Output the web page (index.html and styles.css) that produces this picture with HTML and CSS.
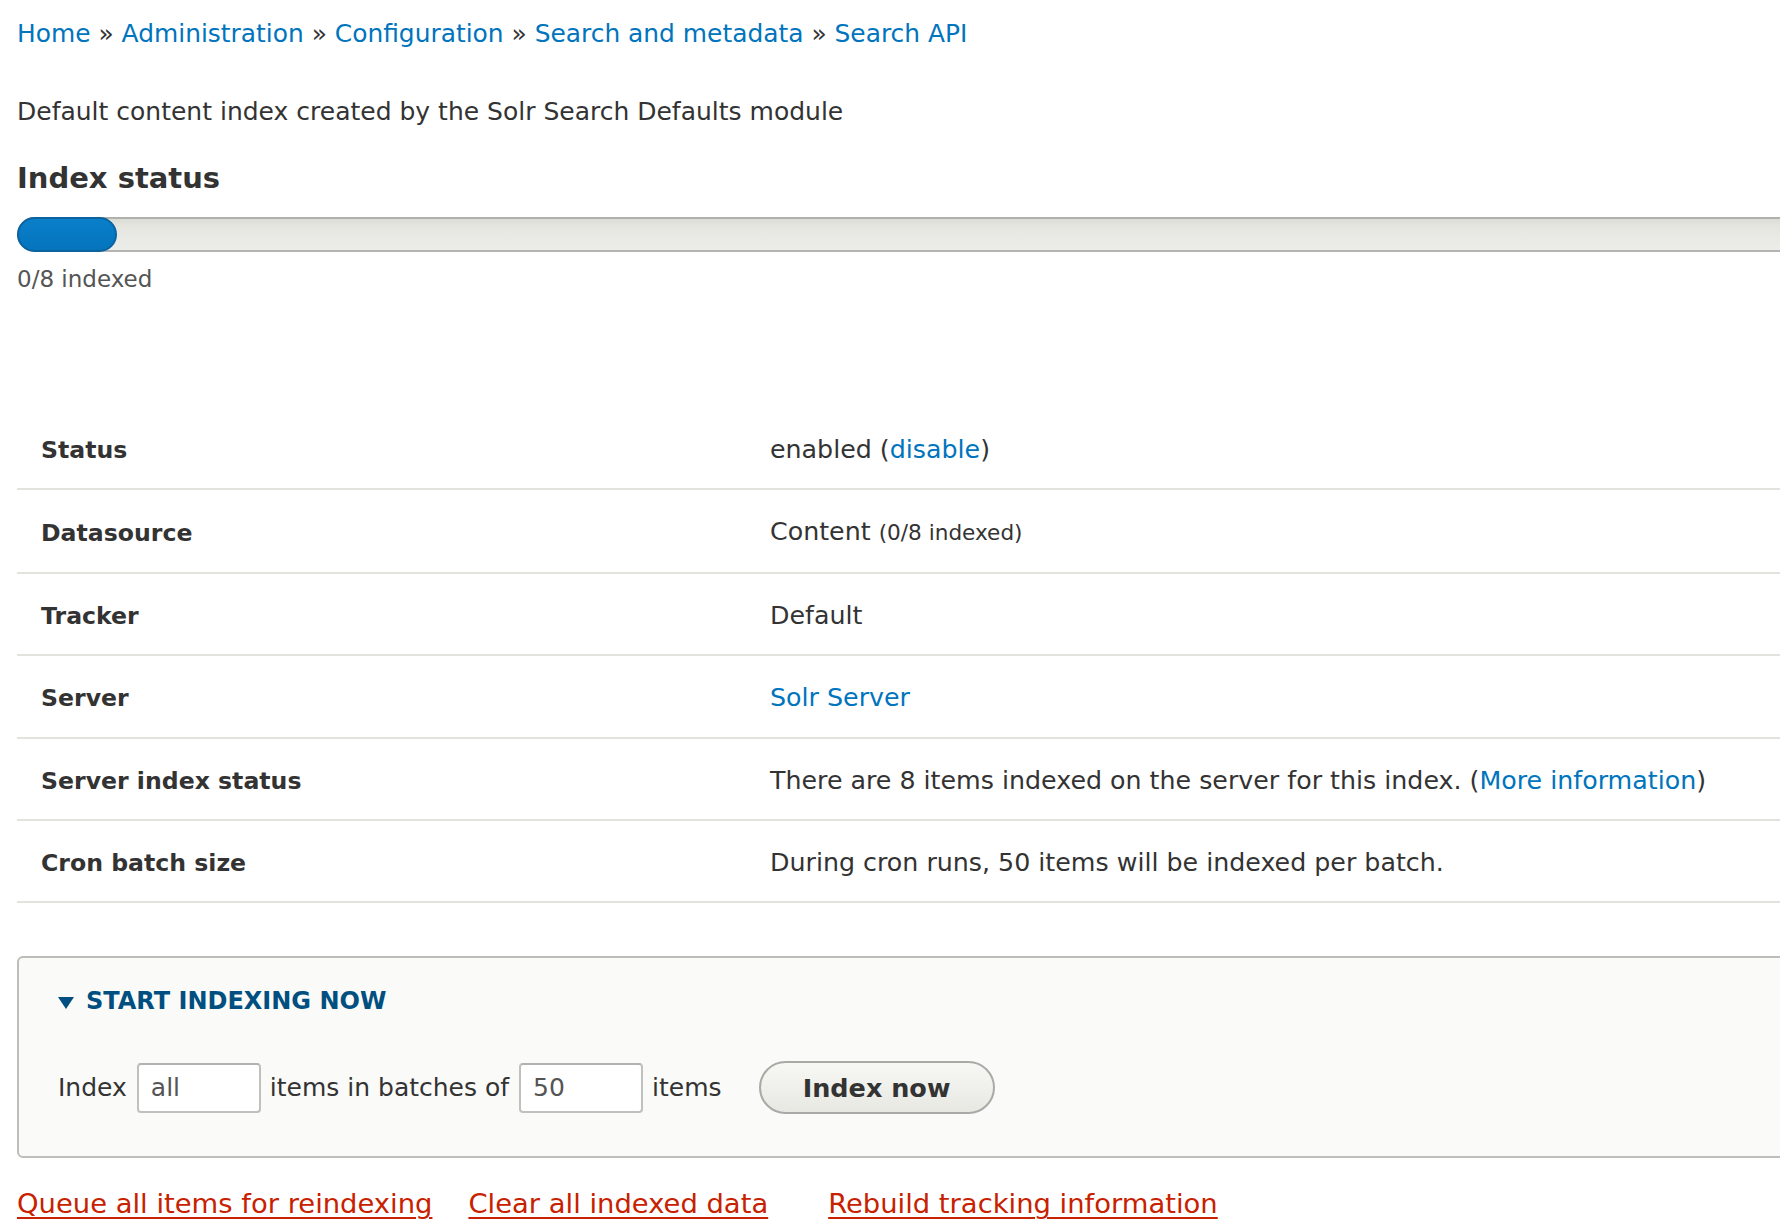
FILE: index.html
```html
<!DOCTYPE html>
<html lang="en">
<head>
<meta charset="utf-8">
<title>Search API index</title>
<link rel="stylesheet" href="styles.css">
</head>
<body>
<div class="page">
  <nav class="breadcrumb">
    <a href="#">Home</a> » <a href="#">Administration</a> » <a href="#">Configuration</a> » <a href="#">Search and metadata</a> » <a href="#">Search API</a>
  </nav>

  <p class="description">Default content index created by the Solr Search Defaults module</p>

  <h2 class="section-title">Index status</h2>
  <div class="progress">
    <div class="progress-track"><div class="progress-bar"></div></div>
    <div class="progress-label">0/8 indexed</div>
  </div>

  <table class="info-table">
    <tbody>
      <tr><td class="label">Status</td><td class="value">enabled (<a href="#">disable</a>)</td></tr>
      <tr><td class="label">Datasource</td><td class="value">Content <small class="count">(0/8 indexed)</small></td></tr>
      <tr><td class="label">Tracker</td><td class="value">Default</td></tr>
      <tr><td class="label">Server</td><td class="value"><a href="#">Solr Server</a></td></tr>
      <tr><td class="label">Server index status</td><td class="value">There are 8 items indexed on the server for this index. (<a href="#">More information</a>)</td></tr>
      <tr><td class="label">Cron batch size</td><td class="value">During cron runs, 50 items will be indexed per batch.</td></tr>
    </tbody>
  </table>

  <section class="details">
    <div class="summary"><span class="triangle"></span>START INDEXING NOW</div>
    <div class="form-row">
      <span class="form-text">Index</span>
      <input class="text-input" type="text" value="all">
      <span class="form-text">items in batches of</span>
      <input class="text-input" type="text" value="50">
      <span class="form-text">items</span>
      <button class="button" type="button">Index now</button>
    </div>
  </section>

  <div class="actions">
    <a href="#" class="danger-link first">Queue all items for reindexing</a>
    <a href="#" class="danger-link second">Clear all indexed data</a>
    <a href="#" class="danger-link">Rebuild tracking information</a>
  </div>
</div>
</body>
</html>
```

FILE: styles.css
```css
html, body {
  margin: 0;
  padding: 0;
  overflow: hidden;
  background: #ffffff;
}

body {
  font-family: "DejaVu Sans", "Liberation Sans", sans-serif;
  font-size: 25px;
  color: #333333;
}

a {
  color: #0074bd;
  text-decoration: none;
}

.page {
  width: 1900px;
  padding-left: 17px;
}

.breadcrumb {
  padding-top: 16px;
  line-height: 36px;
  font-size: 24.9px;
  color: #333333;
}

.description {
  margin: 42px 0 0;
  line-height: 36px;
}

.section-title {
  margin: 30px 0 0;
  font-size: 29px;
  line-height: 36px;
  font-weight: bold;
  color: #333333;
}

.progress {
  margin-top: 21px;
}

.progress-track {
  box-sizing: border-box;
  height: 35px;
  border-top: 2px solid #b0b0ad;
  border-bottom: 2px solid #b4b4b2;
  border-left: 2px solid #b0b0ad;
  border-radius: 18px 0 0 18px;
  background: linear-gradient(#dcdcd6 0%, #e6e6e1 25%, #ecece9 100%);
}

.progress-bar {
  box-sizing: border-box;
  width: 100px;
  height: 35px;
  margin: -2px 0 0 -2px;
  background: linear-gradient(#0a7fca, #0474bd);
  border: 2px solid #0b63a0;
  border-radius: 18px;
}

.progress-label {
  margin-top: 12px;
  font-size: 23px;
  line-height: 30px;
  color: #555555;
}

.info-table {
  margin-top: 114px;
  width: 100%;
  border-collapse: collapse;
}

.info-table td {
  padding: 25px 0 21px;
  line-height: 34.4px;
  border-bottom: 2px solid #e3e3de;
  vertical-align: middle;
}

.info-table td.label {
  width: 729px;
  padding-left: 24px;
  font-weight: bold;
  font-size: 23.6px;
}

.info-table td.value {
  padding-left: 0;
  font-size: 25.3px;
}

.count {
  font-size: 21.6px;
}

.details {
  margin-top: 53px;
  border: 2px solid #bdbdbb;
  border-radius: 6px;
  background: #fafaf8;
  padding: 26px 0 42px 39px;
}

.summary {
  display: flex;
  align-items: center;
  font-size: 24px;
  font-weight: bold;
  line-height: 34px;
  color: #004f80;
}

.triangle {
  width: 0;
  height: 0;
  border-left: 8px solid transparent;
  border-right: 8px solid transparent;
  border-top: 12px solid #004f80;
  margin: 3px 12px 0 0;
}

.form-row {
  margin-top: 43px;
  display: flex;
  align-items: center;
  height: 53px;
}

.form-text {
  line-height: 34px;
  margin-right: 10px;
}

.text-input {
  box-sizing: border-box;
  width: 124px;
  height: 50px;
  margin: 0 9px 0 0;
  padding: 0 12px;
  font-family: "DejaVu Sans", "Liberation Sans", sans-serif;
  font-size: 25px;
  color: #555555;
  background: #ffffff;
  border: 2px solid #c0c0bd;
  border-top-color: #b2b2af;
  border-radius: 4px;
  outline: none;
}

.button {
  box-sizing: border-box;
  width: 236px;
  height: 53px;
  margin-left: 27px;
  padding: 0;
  font-family: "DejaVu Sans", "Liberation Sans", sans-serif;
  font-size: 25.5px;
  font-weight: bold;
  color: #333333;
  background: linear-gradient(#f7f7f4, #e8e8e3);
  border: 2px solid #a9a9a6;
  border-radius: 27px;
}

.actions {
  margin-top: 27px;
  line-height: 38px;
}

.danger-link {
  font-size: 27.4px;
  color: #c72100;
  text-decoration: underline;
  text-decoration-thickness: 2px;
  text-underline-offset: 4px;
}

.danger-link.first {
  margin-right: 28px;
}

.danger-link.second {
  margin-right: 52px;
}
```
